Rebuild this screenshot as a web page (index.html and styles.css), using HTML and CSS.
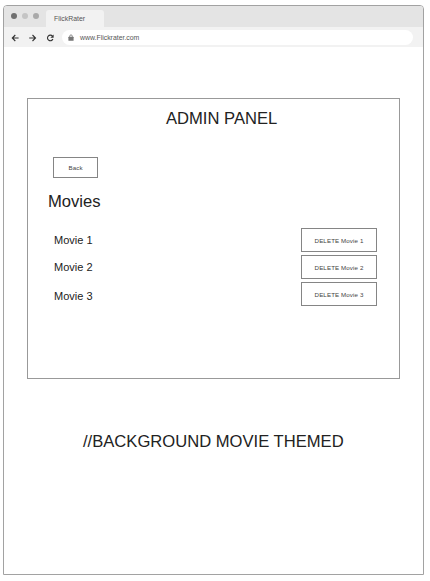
FILE: index.html
```html
<!DOCTYPE html>
<html lang="en">
<head>
<meta charset="utf-8">
<title>FlickRater</title>
<link rel="stylesheet" href="styles.css">
</head>
<body>
<div class="window">
  <div class="tabs">
    <i class="dot dark"></i><i class="dot light"></i><i class="dot mid"></i>
    <div class="tab">FlickRater</div>
  </div>
  <div class="toolbar">
    <svg class="nav" viewBox="0 0 44 10" fill="none" stroke="#333" stroke-width="1.1">
      <path d="M7.6 5H1.5M4.3 2L1.3 5l3 3"/>
      <path d="M18.2 5h6.1M21.5 2l3 3-3 3"/>
      <path d="M41.5 3.2A2.8 2.8 0 1 0 41.9 6"/>
      <path d="M42.6 1.5v3.2h-3.2z" fill="#333" stroke="none"/>
    </svg>
    <div class="address">
      <svg class="lock" viewBox="0 0 6 8"><path d="M1.7 3.5V2.2a1.3 1.3 0 0 1 2.6 0v1.3" fill="none" stroke="#777" stroke-width=".8"/><rect x=".4" y="2.8" width="5.2" height="4" rx=".5" fill="#777"/></svg>
      <span>www.Flickrater.com</span>
    </div>
  </div>
  <main>
    <section class="panel">
      <h1>ADMIN PANEL</h1>
      <button class="back">Back</button>
      <h2>Movies</h2>
      <div class="lists">
        <div class="names"><p>Movie 1</p><p>Movie 2</p><p>Movie 3</p></div>
        <div class="actions">
          <button>DELETE Movie 1</button>
          <button>DELETE Movie 2</button>
          <button>DELETE Movie 3</button>
        </div>
      </div>
    </section>
    <p class="note">//BACKGROUND MOVIE THEMED</p>
  </main>
</div>
</body>
</html>
```
FILE: styles.css
```css
* { box-sizing: border-box; margin: 0; }
body {
  padding: 5px 0 0 3px;
  background: #fff;
  color: #222;
  font-family: "Liberation Sans", Arial, sans-serif;
}
.window {
  width: 421px;
  height: 570px;
  border: 1px solid #a2a2a2;
  border-radius: 4px 4px 0 0;
  overflow: hidden;
}
.tabs {
  display: flex;
  align-items: center;
  gap: 5px;
  height: 21px;
  padding-left: 7px;
  background: #e4e4e4;
}
.dot { width: 6px; height: 6px; margin-top: -1px; border-radius: 50%; }
.dark { background: #707070; }
.light { background: #c4c4c4; }
.mid { background: #a9a9a9; }
.tab {
  align-self: flex-end;
  width: 58px;
  height: 17px;
  margin-left: 2px;
  padding-left: 8px;
  border-radius: 3px 3px 0 0;
  background: #f2f2f2;
  color: #555;
  font-size: 6.9px;
  line-height: 17px;
}
.toolbar {
  display: flex;
  align-items: center;
  height: 20px;
  padding: 1px 9px 0 7px;
  background: #f2f2f2;
}
.nav { width: 44px; height: 10px; }
.address {
  display: flex;
  align-items: center;
  gap: 6px;
  width: 351px;
  height: 15px;
  margin-left: 7px;
  padding-left: 6px;
  border-radius: 8px;
  background: #fff;
  color: #555;
  font-size: 6.9px;
}
.lock { width: 6px; height: 8px; }
main { padding: 51px 24px 0 23px; }
.panel {
  width: 373px;
  height: 281px;
  padding: 10px 22px 0 20px;
  border: 1px solid #999;
}
h1, h2, .note {
  font-size: 16.6px;
  font-weight: 400;
  line-height: 20px;
}
h1 { padding-left: 118px; }
button {
  display: block;
  padding: 0;
  border: 1px solid #858585;
  background: #fff;
  color: #444;
  font-family: inherit;
  font-size: 6.2px;
  letter-spacing: .1px;
}
.back { width: 45px; height: 21px; margin: 28px 0 0 5px; }
h2 { margin-top: 14px; }
.lists { display: flex; justify-content: space-between; margin-top: 16px; }
.names { padding: 6px 0 0 6px; font-size: 11px; line-height: 13px; }
.names p { margin-bottom: 14px; }
.names p:nth-child(2) { margin-bottom: 16px; }
.actions { display: flex; flex-direction: column; gap: 3px; }
.actions button { width: 76px; height: 24px; }
.note { margin-top: 53px; padding-left: 56px; white-space: nowrap; }
```
